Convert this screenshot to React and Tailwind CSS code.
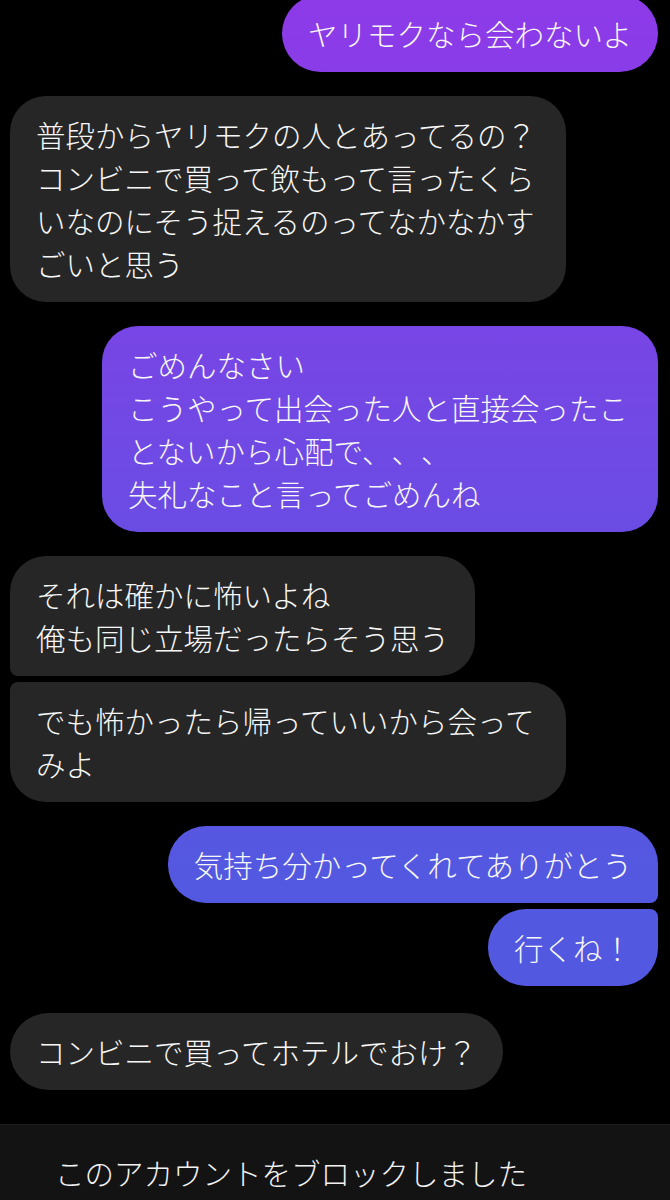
import React from 'react'

const font = { fontFamily: '"Noto Sans CJK JP", "Noto Sans", sans-serif' }

const mine = 'self-end bg-fixed bg-[linear-gradient(to_bottom,#8d3ae8_0px,#5259e0_900px,#5259e0_1200px)]'
const theirs = 'self-start bg-[#262626]'

function Bubble({ me, className = '', children }) {
  return (
    <div
      className={`max-w-[556px] px-[26px] py-[17px] text-[29.5px] leading-[43px] font-light text-[#f7f7f7] whitespace-pre-line ${me ? mine : theirs} ${className}`}
    >
      {children}
    </div>
  )
}

export default function App() {
  return (
    <div
      className="w-[670px] h-[1200px] overflow-hidden bg-black flex flex-col [text-spacing-trim:space-all]"
      style={font}
    >
      <div className="flex flex-col px-[12px] -mt-[5px]">
        <Bubble me className="rounded-full">ヤリモクなら会わないよ</Bubble>

        <Bubble className="mt-[24px] ml-[-2px] rounded-[36px]">
          普段からヤリモクの人とあってるの？コンビニで買って飲もって言ったくらいなのにそう捉えるのってなかなかすごいと思う
        </Bubble>

        <Bubble me className="mt-[24px] rounded-[36px]">
          {'ごめんなさい\nこうやって出会った人と直接会ったことないから心配で、、、\n失礼なこと言ってごめんね'}
        </Bubble>

        <Bubble className="mt-[24px] ml-[-2px] rounded-[36px] rounded-bl-[8px]">
          {'それは確かに怖いよね\n俺も同じ立場だったらそう思う'}
        </Bubble>
        <Bubble className="mt-[6px] ml-[-2px] rounded-[36px] rounded-tl-[8px]">
          でも怖かったら帰っていいから会ってみよ
        </Bubble>

        <Bubble me className="mt-[24px] rounded-[38px] rounded-br-[8px]">
          気持ち分かってくれてありがとう
        </Bubble>
        <Bubble me className="mt-[6px] rounded-[38px] rounded-tr-[8px]">
          行くね！
        </Bubble>

        <Bubble className="mt-[27px] ml-[-2px] rounded-full">コンビニで買ってホテルでおけ？</Bubble>
      </div>

      <div className="mt-auto h-[76px] bg-[#131313] border-t border-[#1c1c1c] pt-[26px] pl-[55px] text-[29.5px] leading-[43px] font-light text-[#f2f2f2]">
        このアカウントをブロックしました
      </div>
    </div>
  )
}
